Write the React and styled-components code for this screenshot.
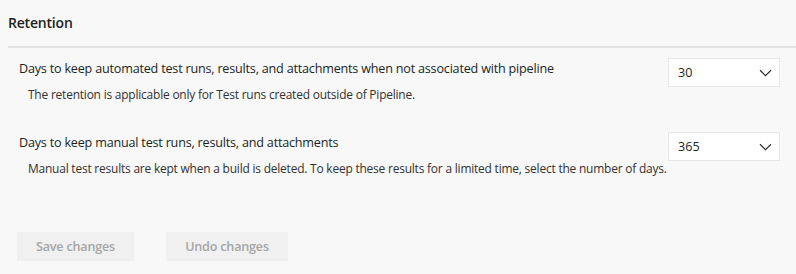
import React from 'react';
import styled, { createGlobalStyle } from 'styled-components';

const GlobalStyle = createGlobalStyle`
    html, body {
        margin: 0;
        padding: 0;
        background: #f8f8f8;
        font-family: "Open Sans", "Noto Sans", sans-serif;
        color: #201f1e;
    }
`;

const Page = styled.div`
    width: 796px;
    height: 274px;
    box-sizing: border-box;
    padding: 0 0 0 8px;
    display: flex;
    flex-direction: column;
`;

const Title = styled.div`
    height: 48px;
    display: flex;
    align-items: center;
    font-size: 14px;
    font-weight: 600;
    letter-spacing: -0.2px;
    color: #201f1e;
    border-bottom: 2px solid #e3e3e3;
    box-sizing: border-box;
    padding-bottom: 2px;
`;

const Body = styled.div`
    display: flex;
    flex-direction: column;
    padding: 10px 16px 0 11px;
    gap: 28px;
`;

const Setting = styled.div`
    display: flex;
    justify-content: space-between;
    align-items: flex-start;
`;

const Texts = styled.div`
    display: flex;
    flex-direction: column;
    padding-top: 2px;
`;

const Label = styled.div`
    font-size: 12.6px;
    letter-spacing: -0.2px;
    line-height: 18px;
    color: #201f1e;
`;

const Hint = styled.div`
    margin-top: 8px;
    padding-left: 9px;
    font-size: 11.95px;
    letter-spacing: -0.2px;
    line-height: 18px;
    color: #323130;
`;

const Select = styled.div`
    width: 112px;
    height: 29px;
    box-sizing: border-box;
    background: #ffffff;
    border: 1px solid #e6e6e6;
    display: flex;
    align-items: center;
    justify-content: space-between;
    padding: 0 7px 0 9px;
    font-size: 12.6px;
    color: #201f1e;
`;

const Footer = styled.div`
    display: flex;
    gap: 32px;
    padding: 54px 0 0 9px;
`;

const Button = styled.button`
    height: 29px;
    width: ${(props) => props.width}px;
    padding: 0;
    border: none;
    background: #f0f0f0;
    color: #a6a6a6;
    font-family: inherit;
    font-size: 12.6px;
    letter-spacing: -0.2px;
    font-weight: 600;
    cursor: default;
`;

const Chevron = () => (
    <svg width="13" height="8" viewBox="0 0 13 8">
        <path d="M1 1.2 L6.5 6.6 L12 1.2" fill="none" stroke="#323130" strokeWidth="1.2" />
    </svg>
);

const settings = [
    {
        label: 'Days to keep automated test runs, results, and attachments when not associated with pipeline',
        hint: 'The retention is applicable only for Test runs created outside of Pipeline.',
        value: '30',
    },
    {
        label: 'Days to keep manual test runs, results, and attachments',
        hint: 'Manual test results are kept when a build is deleted. To keep these results for a limited time, select the number of days.',
        value: '365',
    },
];

const App = () => {
    return (
        <>
            <GlobalStyle />
            <Page>
                <Title>Retention</Title>
                <Body>
                    {settings.map((s) => (
                        <Setting key={s.value}>
                            <Texts>
                                <Label>{s.label}</Label>
                                <Hint>{s.hint}</Hint>
                            </Texts>
                            <Select>
                                <span>{s.value}</span>
                                <Chevron />
                            </Select>
                        </Setting>
                    ))}
                </Body>
                <Footer>
                    <Button width={117} disabled>Save changes</Button>
                    <Button width={122} disabled>Undo changes</Button>
                </Footer>
            </Page>
        </>
    );
};

export default App;
